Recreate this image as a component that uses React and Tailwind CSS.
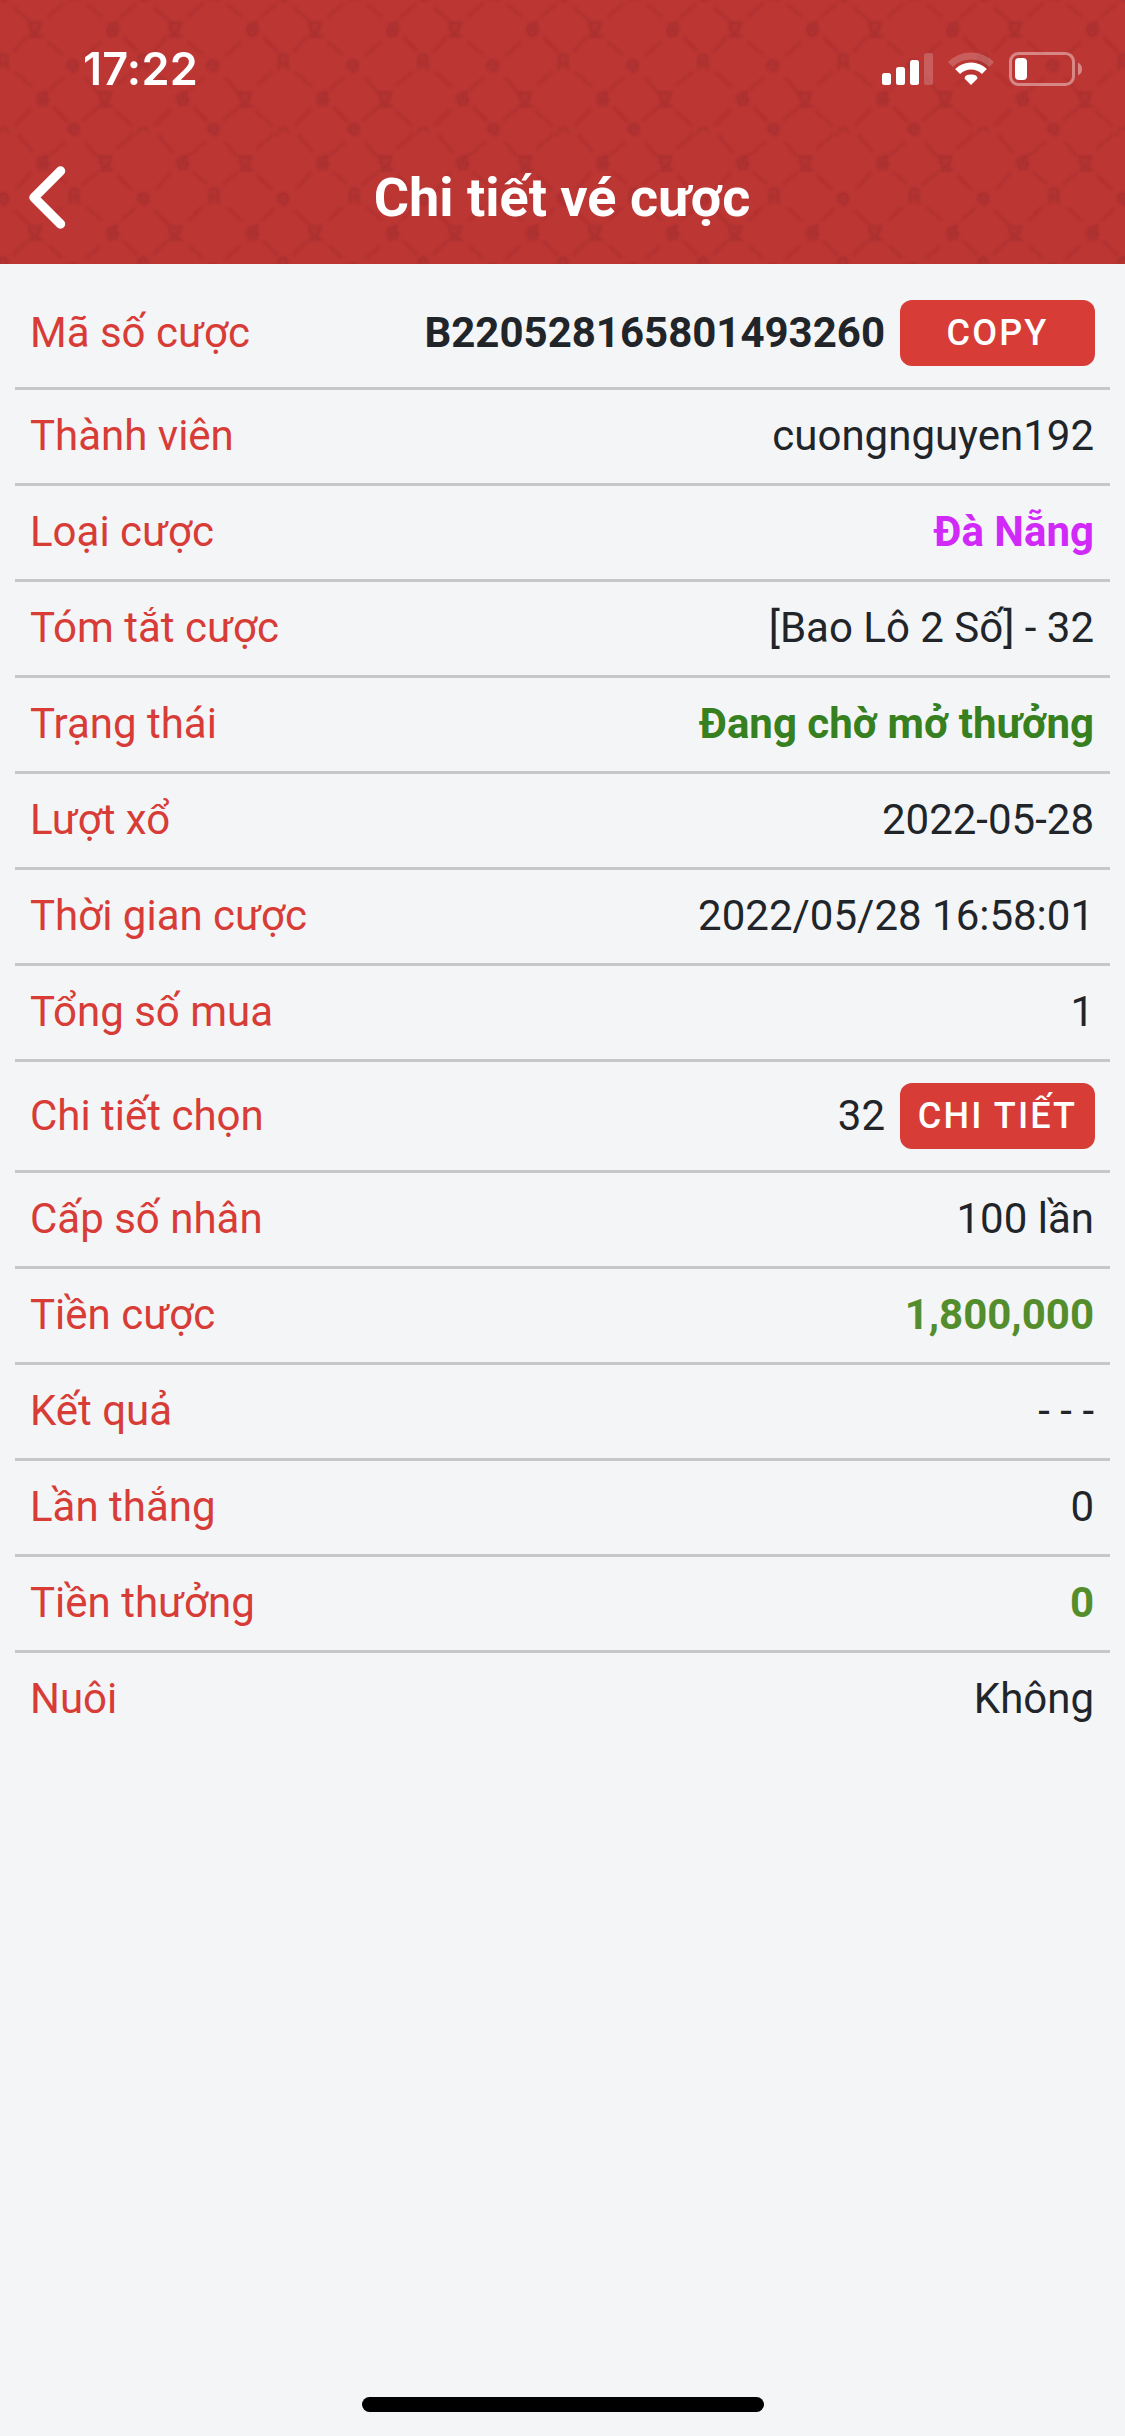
import React from 'react';
import clsx from 'clsx';

const filas = [
  { etiqueta: 'Mã số cược', valor: 'B220528165801493260', estilo: 'font-bold', boton: 'COPY' },
  { etiqueta: 'Thành viên', valor: 'cuongnguyen192' },
  { etiqueta: 'Loại cược', valor: 'Đà Nẵng', estilo: 'font-bold text-[#d12af8]' },
  { etiqueta: 'Tóm tắt cược', valor: '[Bao Lô 2 Số] - 32' },
  { etiqueta: 'Trạng thái', valor: 'Đang chờ mở thưởng', estilo: 'font-bold text-[#37801f]' },
  { etiqueta: 'Lượt xổ', valor: '2022-05-28' },
  { etiqueta: 'Thời gian cược', valor: '2022/05/28 16:58:01' },
  { etiqueta: 'Tổng số mua', valor: '1' },
  { etiqueta: 'Chi tiết chọn', valor: '32', boton: 'CHI TIẾT' },
  { etiqueta: 'Cấp số nhân', valor: '100 lần' },
  { etiqueta: 'Tiền cược', valor: '1,800,000', estilo: 'font-bold text-[#538d2c]' },
  { etiqueta: 'Kết quả', valor: '- - -' },
  { etiqueta: 'Lần thắng', valor: '0' },
  { etiqueta: 'Tiền thưởng', valor: '0', estilo: 'font-bold text-[#538d2c]' },
  { etiqueta: 'Nuôi', valor: 'Không' },
];

// El motivo se repite cada 140 x 203.5
const ANCHO = 140;
const ALTO = 203.5;
const columnas = [-2, -1, 0, 1, 2, 3, 4, 5, 6];
const escudos = [[315, 28.5], [245, 98.5], [245.5, 162.5]];
const espirales = [[252.5, 29], [322.5, 98.5], [322.5, 162.5]];
const arcos = [[283, 62], [214, 196]];
const monedas = [[212.5, 65.5], [213.5, 129], [283, 198.5]];

function Patron() {
  return (
    <svg className="absolute inset-0 -z-10" width="1125" height="264" aria-hidden="true">
      <defs>
        <filter id="suave" x="-10%" y="-10%" width="120%" height="120%">
          <feGaussianBlur stdDeviation="1.1" />
        </filter>
        <g id="motivo" stroke="#a32e30" fill="none">
          {/* Lados de los rombos */}
          <g strokeWidth="2" strokeOpacity="0.6">
            <path d="M227 4l15 13M261 17l15-13M294 7l16 15M328 17l15-14" />
            <path d="M225 56l16-14M263 37l15 15M293 52l14-15M328 42l15 13" />
            <path d="M225 78l14 15M257 85l15-13M295 72l17 15M330 90l14-13" />
            <path d="M223 121l15-14M256 111l16 15M295 125l16-16M333 107l15 15" />
            <path d="M225 143l13 14M257 149l16-15M298 135l15 17M330 155l15-13" />
            <path d="M223 185l14-13M257 175l15 15M296 189l15-16M333 172l14 12" />
          </g>
          {/* Emblemas de los cruces */}
          <g strokeWidth="2.500" strokeOpacity="0.55" strokeLinecap="round" fill="#a32e30" fillOpacity="0.3">
            {escudos.map(([x, y]) => (
              <path key={`${x}-${y}`} transform={`translate(${x} ${y})`} d="M-6-6H6L4 2 1 4 6 8H-5l3-4-3-3z" />
            ))}
            {espirales.map(([x, y]) => (
              <path key={`${x}-${y}`} transform={`translate(${x} ${y})`} d="M5-7-3-5-6 0l3 7 7-1 2-6-5-2-3 3 4 1M5-7 4-3" />
            ))}
            {arcos.map(([x, y]) => (
              <path key={`${x}-${y}`} transform={`translate(${x} ${y})`} d="M-5 7V-4l3-4h4l3 4V7M-5 1H5" />
            ))}
            {monedas.map(([x, y]) => (
              <path key={`${x}-${y}`} transform={`translate(${x} ${y})`} d="M-5 2a5.500 5.500 0 1 1 10 1l-4 3zM-2 0h4" />
            ))}
            <path d="M277 134l3-5 5-1 4 4" fill="none" />
          </g>
        </g>
      </defs>
      <g filter="url(#suave)">
        {[-1, 0, 1].map((fila) =>
          columnas.map((col) => (
            <use key={`${fila}-${col}`} href="#motivo" x={col * ANCHO} y={fila * ALTO} />
          ))
        )}
      </g>
    </svg>
  );
}

function BarraEstado() {
  return (
    <div className="flex h-[132px] items-start justify-between pl-[83px] pr-[42px]">
      <span className="mt-[42px] font-[Inter,sans-serif] text-[45px] leading-[54px] font-semibold tracking-[0.2px] text-white">17:22</span>
      <svg className="mt-[48px]" width="203" height="42" viewBox="880 48 203 42" fill="#fff">
        {/* Cobertura */}
        <rect x="882" y="73" width="9" height="12" rx="2.500" />
        <rect x="896" y="67" width="9" height="18" rx="2.500" />
        <rect x="910" y="60" width="9" height="25" rx="2.500" />
        <rect x="924" y="53" width="9" height="32" rx="2.500" opacity="0.2" />
        {/* Wifi */}
        <path d="M950.400 64.400a29.200 29.200 0 0 1 41.200 0" fill="none" stroke="#fff" strokeOpacity="0.2" strokeWidth="7" />
        <path d="M957.600 71.600a19 19 0 0 1 26.800 0" fill="none" stroke="#fff" strokeWidth="7" />
        <path d="M971 85l-6.500-6.500q0-4 6.500-4t6.500 4z" />
        {/* Batería */}
        <rect x="1010.500" y="53.500" width="63" height="31" rx="8" fill="none" stroke="#fff" strokeOpacity="0.4" strokeWidth="3" />
        <rect x="1015" y="58" width="12" height="22" rx="4" />
        <path d="M1078 62.500q4 2 4 6.500t-4 6.500z" opacity="0.4" />
      </svg>
    </div>
  );
}

function Fila({ etiqueta, valor, estilo, boton }) {
  return (
    <div className={clsx('flex min-h-[96px] items-center justify-between border-b-[3px] border-[#c6c7c9] px-[15px] last:min-h-[93px] last:border-b-0', !boton && 'pb-[2px]')}>
      <span className="text-[#d73c37]">{etiqueta}</span>
      <div className={clsx('flex items-center', boton && 'py-[21px]')}>
        <span className={clsx('mr-px', estilo)}>{valor}</span>
        {boton && (
          <button type="button" className="ml-[14px] h-[66px] w-[195px] rounded-[12px] bg-[#d73c37] text-[36px] font-medium tracking-[2.16px] text-white">
            {boton}
          </button>
        )}
      </div>
    </div>
  );
}

export default function App() {
  return (
    <div className="flex h-[2436px] w-[1125px] flex-col bg-[#f4f5f7] font-[Roboto,sans-serif] text-[42px] leading-[60px] text-[#212529]">
      <header className="relative isolate h-[264px] bg-[#bc3734]">
        <Patron />
        <BarraEstado />
        <div className="flex h-[132px] items-center px-[27px]">
          <svg width="42" height="70" viewBox="0 0 42 70" fill="none" stroke="#fff" strokeWidth="9.500" strokeLinecap="round" strokeLinejoin="round">
            <path d="M33.500 8 7 34.500 33.500 61" />
          </svg>
          <h1 className="flex-1 pr-[43px] text-center text-[54px] font-bold text-white">Chi tiết vé cược</h1>
        </div>
      </header>
      <main className="flex-1 px-[15px] pt-[15px]">
        {filas.map((fila) => (
          <Fila key={fila.etiqueta} {...fila} />
        ))}
      </main>
      <div className="mx-auto mb-[24px] h-[15px] w-[402px] rounded-full bg-black" />
    </div>
  );
}
